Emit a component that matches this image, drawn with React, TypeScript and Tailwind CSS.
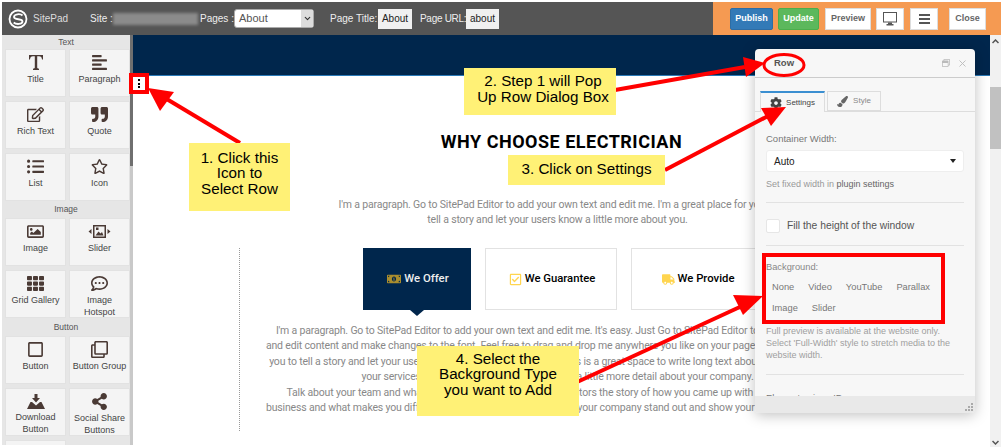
import type { ReactNode } from "react";
import {
  FaAlignLeft,
  FaCog,
  FaListUl,
  FaMoneyBillAlt,
  FaPaintBrush,
  FaQuoteRight,
  FaRegCheckSquare,
  FaRegClone,
  FaRegCommentDots,
  FaRegEdit,
  FaRegImage,
  FaRegSquare,
  FaRegStar,
  FaRegWindowRestore,
  FaShareAlt,
  FaTh,
  FaTruck,
} from "react-icons/fa";
import { ChevronDown, X } from "lucide-react";

function TitleIcon() {
  return (
    <svg width="14" height="15" viewBox="0 0 14 15" fill="#4a3a35">
      <path d="M0 0h14v4.500h-1C12.700 2.300 12 1.300 10 1.300H8.200v11c0 1 .5 1.300 1.800 1.400V15H4v-1.300c1.300-.1 1.800-.4 1.800-1.400v-11H4C2 1.300 1.300 2.300 1 4.500H0z" />
    </svg>
  );
}

function SliderIcon() {
  return (
    <svg width="23" height="15" viewBox="0 0 23 15" fill="#4a3a35">
      <path d="M5 1h13v13H5zM6.500 2.500v10h10v-10z" fillRule="evenodd" />
      <path d="M7.500 11.500l3-4 2 2 1.500-1.500 1.500 3.500zM8 3.500h2.500V6H8zM3.500 5v5L.5 7.500zM19.500 5v5l3-2.500z" />
    </svg>
  );
}

function DownloadIcon() {
  return (
    <svg width="18" height="15" viewBox="0 0 18 15" fill="#4a3a35">
      <path d="M7.500 0h3v4H13L9 8.500 5 4h2.500zM0 15l3.500-7H5l4 3.500L13 8h1.500l3.500 7z" />
    </svg>
  );
}

function LogoIcon() {
  return (
    <svg width="20" height="20" viewBox="0 0 20 20" fill="none" stroke="#fff" strokeWidth="1.800">
      <circle cx="10" cy="10" r="8.500" />
      <path d="M14.500 6.500C12.500 4.500 6 4.800 6 8c0 3.500 8.500 1 8.500 4.500 0 3-6.500 3.200-8.800 1" />
    </svg>
  );
}

function MonitorIcon() {
  return (
    <svg width="14" height="14" viewBox="0 0 14 14" fill="none">
      <rect x="0.500" y="0.500" width="13" height="9.500" fill="#fff" stroke="#555" />
      <rect x="5" y="10.500" width="4" height="1.500" fill="#555" />
      <rect x="3.500" y="12" width="7" height="1.500" fill="#555" />
    </svg>
  );
}

function Tile({ icon, label }: { icon: ReactNode; label: ReactNode }) {
  return (
    <div className="flex h-[48px] w-[61px] flex-col items-center border border-[#e2e2e2] bg-[#f4f4f4] pt-[4px] text-center text-[9px] leading-[11.500px] text-[#444]">
      <div className="flex h-[17px] items-center text-[17px] text-[#4a3a35]">{icon}</div>
      <div className="mt-[3px]">{label}</div>
    </div>
  );
}

function SectionLabel({ children, h }: { children: string; h: string }) {
  return <div className={`${h} flex items-center justify-center text-[8.500px] text-[#555]`}>{children}</div>;
}

function Grid({ children }: { children: ReactNode }) {
  return <div className="grid grid-cols-[61px_61px] gap-x-[3px] gap-y-[4px] pl-[3px]">{children}</div>;
}

function Sidebar() {
  return (
    <aside className="flex h-[410px] shrink-0 overflow-hidden">
      <div className="w-[128px] overflow-hidden bg-[#e6e6e6]">
        <SectionLabel h="h-[14px]">Text</SectionLabel>
        <Grid>
          <Tile icon={<TitleIcon />} label="Title" />
          <Tile icon={<FaAlignLeft />} label="Paragraph" />
          <Tile icon={<FaRegEdit />} label="Rich Text" />
          <Tile icon={<FaQuoteRight />} label="Quote" />
          <Tile icon={<FaListUl />} label="List" />
          <Tile icon={<FaRegStar />} label="Icon" />
        </Grid>
        <SectionLabel h="h-[17px]">Image</SectionLabel>
        <Grid>
          <Tile icon={<FaRegImage />} label="Image" />
          <Tile icon={<SliderIcon />} label="Slider" />
          <Tile icon={<FaTh />} label="Grid Gallery" />
          <Tile
            icon={<FaRegCommentDots />}
            label={
              <>
                Image
                <br />
                Hotspot
              </>
            }
          />
        </Grid>
        <SectionLabel h="h-[18px]">Button</SectionLabel>
        <Grid>
          <Tile icon={<FaRegSquare />} label="Button" />
          <Tile icon={<FaRegClone />} label="Button Group" />
          <Tile icon={<DownloadIcon />} label="Download Button" />
          <Tile icon={<FaShareAlt />} label="Social Share Buttons" />
          <Tile icon={null} label="" />
        </Grid>
      </div>
      <div className="w-[3px] bg-[#c9c9c9]">
        <div className="h-[131px] bg-[#6f6f6f]" />
      </div>
    </aside>
  );
}

function TopBar() {
  return (
    <header className="flex h-[33px] text-[10px] whitespace-nowrap">
      <div className="flex w-[711px] items-center bg-[#555] text-[#eee]">
        <div className="ml-[6px]">
          <LogoIcon />
        </div>
        <span className="ml-[5px] w-[57px] text-[#ddd]">SitePad</span>
        <span className="w-[23px]">Site :</span>
        <div className="h-[12px] w-[85px] bg-[#8b8b8b] blur-[1.500px]" />
        <span className="ml-[2px] w-[34px]">Pages :</span>
        <div className="flex h-[19px] w-[80px] items-center justify-between rounded-[3px] border border-[#aaa] bg-white pl-[4px] text-[11px] text-[#555]">
          About
          <span className="flex h-full w-[12px] items-center justify-center bg-[#ddd]">
            <ChevronDown size={9} strokeWidth={3} className="text-[#333]" />
          </span>
        </div>
        <span className="ml-[16px] w-[48px]">Page Title:</span>
        <span className="flex h-[20px] w-[34px] items-center justify-center bg-[#f0f0f0] text-[#222]">About</span>
        <span className="ml-[8px] w-[46px] tracking-[-0.3px]">Page URL:</span>
        <span className="flex h-[20px] w-[33px] items-center justify-center bg-[#f0f0f0] text-[#222]">about</span>
      </div>
      <div className="flex flex-1 items-center bg-[#f59a52] pl-[17px] text-[9px] font-bold">
        <button className="h-[22px] w-[43px] rounded-[2px] border border-[#2e6da4] bg-[#337ab7] text-white">Publish</button>
        <button className="ml-[5px] h-[22px] w-[41px] rounded-[2px] border border-[#4cae4c] bg-[#5cb85c] text-white">Update</button>
        <button className="ml-[6px] h-[22px] w-[46px] border border-[#ddd] bg-white text-[#666]">Preview</button>
        <button className="ml-[5px] flex h-[22px] w-[28px] items-center justify-center border border-[#ddd] bg-white">
          <MonitorIcon />
        </button>
        <button className="ml-[6px] flex h-[22px] w-[28px] flex-col items-center justify-center gap-[2px] border border-[#ddd] bg-white">
          <i className="h-[2px] w-[11px] bg-[#555]" />
          <i className="h-[2px] w-[11px] bg-[#555]" />
          <i className="h-[2px] w-[11px] bg-[#555]" />
        </button>
        <button className="ml-[11px] h-[22px] w-[37px] border border-[#ddd] bg-white text-[#666]">Close</button>
      </div>
    </header>
  );
}

const bodyLines = [
  "I'm a paragraph. Go to SitePad Editor to add your own text and edit me. It's easy. Just Go to SitePad Editor to add your text and",
  "and edit content and make changes to the font. Feel free to drag and drop me anywhere you like on your page. I'm a great place for",
  "you to tell a story and let your users know a little more about you. This is a great space to write long text about your company and",
  "your services. You can use this space to go into a little more detail about your company.",
  "Talk about your team and what services you provide. Tell your visitors the story of how you came up with the idea for your",
  "business and what makes you different from your competitors. Make your company stand out and show your visitors who you are.",
];

function Canvas() {
  return (
    <main className="flex-1 overflow-hidden bg-white font-['Roboto',sans-serif]">
      <div className="h-[41px] border-b border-[#2a7ab8] bg-[#00264c]" />
      <h1 className="mt-[55px] text-center text-[18px] leading-[21px] font-bold tracking-[0.5px] text-black">WHY CHOOSE ELECTRICIAN</h1>
      <p className="mt-[45px] ml-[-8px] text-center text-[10.500px] leading-[15px] tracking-[-0.17px] whitespace-nowrap text-[#888]">
        I'm a paragraph. Go to SitePad Editor to add your own text and edit me. I'm a great place for you to
        <br />
        tell a story and let your users know a little more about you.
      </p>
      <section className="mt-[21px] ml-[106px] h-[183px] w-[636px] border-l border-dotted border-[#999]">
        <div className="flex gap-[14px] pl-[123px] text-[11.300px] font-medium">
          <div className="relative flex h-[62px] w-[108px] items-center justify-center gap-[3px] bg-[#00264c] pl-[2px] text-[#eee]">
            <FaMoneyBillAlt className="text-[14px] text-[#a98d2e]" />
            We Offer
            <div className="absolute top-full left-1/2 h-0 w-0 -translate-x-1/2 border-x-[7px] border-t-[6px] border-x-transparent border-t-[#00264c]" />
          </div>
          <div className="flex h-[62px] w-[132px] items-center justify-center gap-[3px] border border-[#e2e2e2] pl-[2px] text-black">
            <FaRegCheckSquare className="text-[13px] text-[#ffd54f]" />
            We Guarantee
          </div>
          <div className="flex h-[62px] w-[134px] items-center justify-center gap-[3px] border border-[#e2e2e2] text-black">
            <FaTruck className="text-[13px] text-[#ffd54f]" />
            We Provide
          </div>
        </div>
        <div className="mt-[13px] text-center text-[10.500px] leading-[15.400px] tracking-[-0.17px] whitespace-nowrap text-[#888]">
          {bodyLines.map((line) => (
            <div key={line} className="flex justify-center">
              {line}
            </div>
          ))}
        </div>
      </section>
    </main>
  );
}

function PageScrollbar() {
  return (
    <div className="flex w-[11px] flex-col items-center bg-[#f1f1f1] text-[#555]">
      <svg className="mt-[4px]" width="7" height="5" viewBox="0 0 7 5" fill="none" stroke="#555" strokeWidth="1.500">
        <path d="M.5 4l3-3 3 3" />
      </svg>
      <div className="mt-[43px] h-[62px] w-full bg-[#c1c1c1]" />
      <svg className="mt-auto mb-[2px]" width="7" height="5" viewBox="0 0 7 5" fill="none" stroke="#555" strokeWidth="1.500">
        <path d="M.5 1l3 3 3-3" />
      </svg>
    </div>
  );
}

function RowDialog() {
  return (
    <div className="absolute top-[49px] left-[755px] flex h-[364px] w-[220px] flex-col overflow-hidden rounded-[4px] bg-[#f7f7f7] text-[9.300px] whitespace-nowrap text-[#888] shadow-[0_2px_14px_rgba(0,0,0,0.25)]">
      <div className="flex h-[29px] shrink-0 items-center justify-between border-b border-[#ccc] pr-[7px] pl-[19px]">
        <span className="text-[9.500px] font-bold text-[#555]">Row</span>
        <div className="flex items-center gap-[7px] text-[#bbb]">
          <FaRegWindowRestore className="text-[8px]" />
          <X size={11} />
        </div>
      </div>
      <div className="mt-[13px] flex h-[21px] shrink-0 gap-[2px] border-b border-[#ddd] pl-[5px] text-[8px]">
        <div className="flex h-[21px] w-[65px] items-center justify-center gap-[4px] border-x border-t-2 border-x-[#ddd] border-t-[#3b8fd1] bg-[#f7f7f7] text-[#444]">
          <FaCog className="text-[12px]" />
          Settings
        </div>
        <div className="flex h-[20px] w-[54px] items-center justify-center gap-[5px] border border-[#ddd] text-[#888]">
          <FaPaintBrush className="text-[11px] text-[#666]" />
          Style
        </div>
      </div>
      <div className="flex-1 overflow-hidden px-[11px]">
        <div className="mt-[20px] text-[9.500px] leading-[13px] text-[#777]">Container Width:</div>
        <div className="mt-[5px] flex h-[22px] items-center justify-between rounded-[3px] border border-[#eee] bg-white px-[7px] text-[10px] text-[#222]">
          Auto
          <span className="h-0 w-0 border-x-[3px] border-t-[4px] border-x-transparent border-t-[#222]" />
        </div>
        <div className="mt-[6px] text-[9px] leading-[12px] text-[#999]">
          Set fixed width in <span className="text-[#666]">plugin settings</span>
        </div>
        <hr className="mt-[12px] border-[#e2e2e2]" />
        <div className="mt-[15px] flex items-center gap-[7px] text-[10.300px] text-[#555]">
          <div className="h-[14px] w-[14px] rounded-[2px] border border-[#e6e6e6] bg-white" />
          Fill the height of the window
        </div>
        <hr className="mt-[12px] border-[#e2e2e2]" />
        <div className="mt-[15px] leading-[13px] text-[#888]">Background:</div>
        <div className="mt-[7px] flex gap-x-[14px] pl-[6px] leading-[13px] text-[#777]">
          <span>None</span>
          <span>Video</span>
          <span>YouTube</span>
          <span>Parallax</span>
        </div>
        <div className="mt-[8px] flex gap-x-[14px] pl-[6px] leading-[13px] text-[#777]">
          <span>Image</span>
          <span>Slider</span>
        </div>
        <div className="mt-[10px] text-[9px] leading-[12px] text-[#a0a0a0]">
          Full preview is available at the website only.
          <br />
          Select 'Full-Width' style to stretch media to the
          <br />
          website width.
        </div>
        <hr className="mt-[13px] border-[#e2e2e2]" />
        <div className="mt-[17px] leading-[13px] text-[#777]">Element unique ID</div>
      </div>
      <div className="relative h-[17px] shrink-0 bg-[#e9e9e9]">
        <div className="absolute right-[2px] bottom-[2px] grid grid-cols-3 gap-[1px]">
          {[0, 0, 1, 0, 1, 1, 1, 1, 1].map((on, i) => (
            <i key={i} className={on ? "h-[2px] w-[2px] bg-[#aaa]" : "h-[2px] w-[2px]"} />
          ))}
        </div>
      </div>
    </div>
  );
}

function Note({ className, children }: { className: string; children: ReactNode }) {
  return (
    <div className={`absolute flex items-center justify-center bg-[#fff176] text-center text-[15.200px] leading-[15.500px] text-black ${className}`}>
      <div>{children}</div>
    </div>
  );
}

function Annotations() {
  return (
    <>
      <svg className="pointer-events-none absolute inset-0" width="1001" height="447" viewBox="0 0 1001 447" fill="none">
        <ellipse cx="784" cy="65" rx="20" ry="10.500" stroke="#f00" strokeWidth="3" />
        <g stroke="#f00" strokeWidth="4">
          <path d="M240 143L165 98" />
          <path d="M615 90L745 67" />
          <path d="M665 170L768 116" />
          <path d="M575 383L742 306" />
        </g>
        <g fill="#f00">
          <path d="M148 88L174 92L160 111z" />
          <path d="M765 63L743 57L746 77z" />
          <path d="M786 107L761 108L771 126z" />
          <path d="M763 296L733 295L743 315z" />
        </g>
      </svg>
      <Note className="top-[143px] left-[189px] h-[68px] w-[101px] pb-[8px]">
        1. Click this
        <br />
        Icon to
        <br />
        Select Row
      </Note>
      <Note className="top-[68px] left-[464px] h-[47px] w-[152px] pb-[6px] pl-[6px]">
        2. Step 1 will Pop
        <br />
        Up Row Dialog Box
      </Note>
      <Note className="top-[155px] left-[508px] h-[30px] w-[157px] pb-[3px]">3. Click on Settings</Note>
      <Note className="top-[346px] left-[417px] h-[70px] w-[162px] pb-[14px]">
        4. Select the
        <br />
        Background Type
        <br />
        you want to Add
      </Note>
      <div className="absolute top-[73px] left-[129px] flex h-[21px] w-[20px] flex-col items-center justify-center gap-[1.500px] bg-white">
        <i className="h-[2px] w-[2px] bg-black" />
        <i className="h-[2px] w-[2px] bg-black" />
        <i className="h-[2px] w-[2px] bg-black" />
      </div>
      <svg className="pointer-events-none absolute top-[73px] left-[129px]" width="20" height="21" fill="none">
        <rect x="2" y="2" width="16" height="17" stroke="#f00" strokeWidth="4" />
      </svg>
      <svg className="pointer-events-none absolute top-[253px] left-[762px]" width="183" height="71" fill="none">
        <rect x="2" y="2" width="179" height="67" stroke="#f00" strokeWidth="4" />
      </svg>
    </>
  );
}

export default function App() {
  return (
    <div className="relative h-[447px] w-[1001px] overflow-hidden bg-white pt-[2px] pl-[2px] font-['Liberation_Sans',Arial,sans-serif]">
      <TopBar />
      <div className="flex h-[412px]">
        <Sidebar />
        <Canvas />
        <PageScrollbar />
      </div>
      <RowDialog />
      <Annotations />
    </div>
  );
}
